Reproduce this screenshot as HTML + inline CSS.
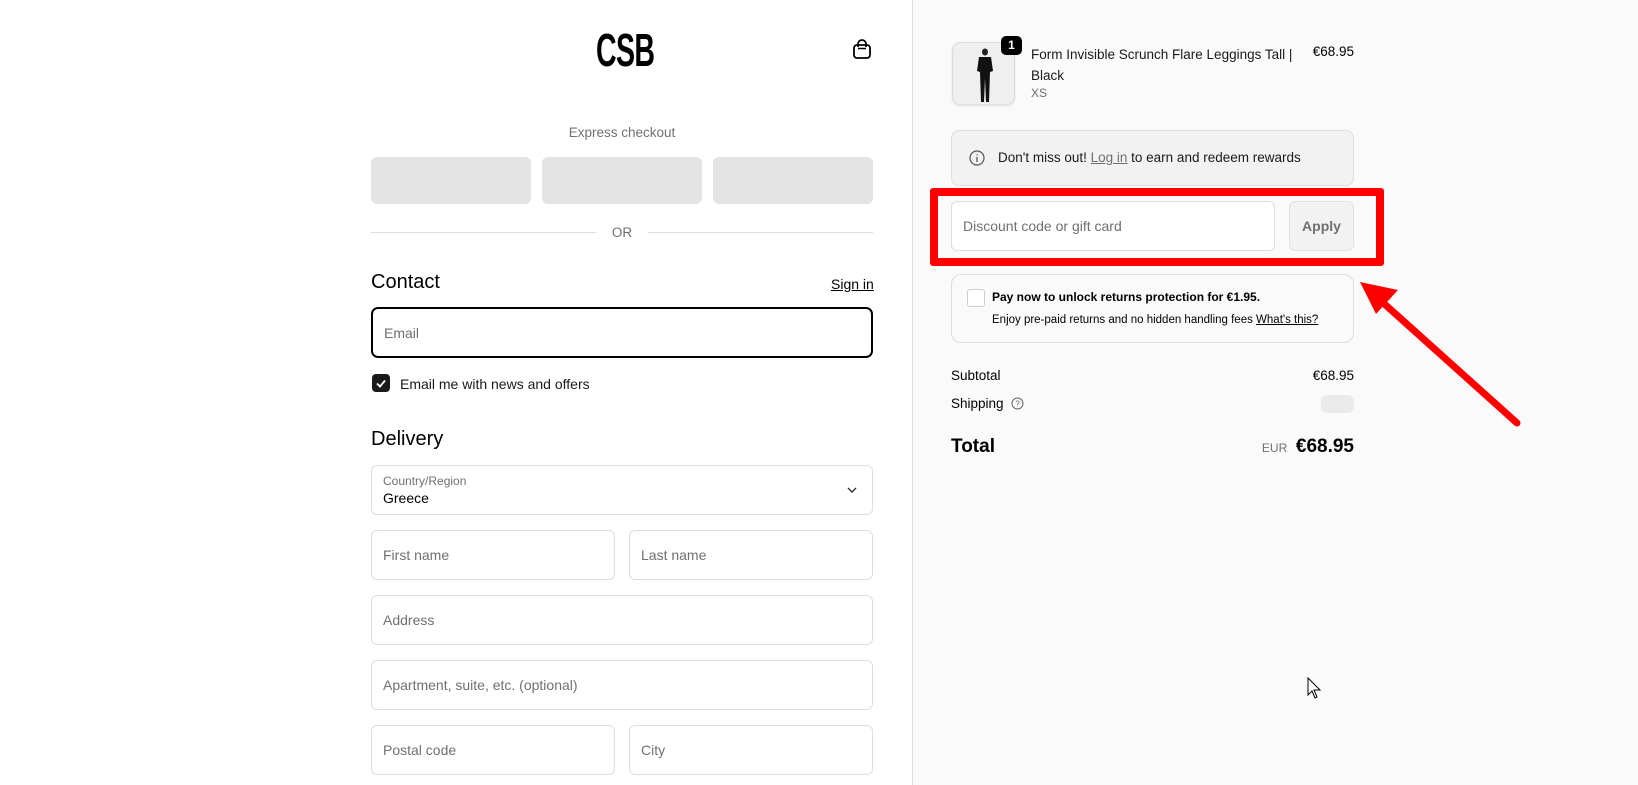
<!DOCTYPE html>
<html><head><meta charset="utf-8"><style>
*{box-sizing:border-box;margin:0;padding:0}
body{width:1638px;height:785px;overflow:hidden;background:#fff;font-family:"Liberation Sans",sans-serif;color:#000;position:relative;font-size:14px}
.a{position:absolute}
.right{left:912px;top:0;width:726px;height:785px;background:#fafafa;border-left:1px solid #dedede}
.in{position:absolute;border:1px solid #dedede;border-radius:6px;background:#fff;color:#707070;font-size:14px;padding-left:11px;display:flex;align-items:center}
.gb{position:absolute;top:157px;height:47px;width:160px;background:#e3e3e3;border-radius:6px}
</style></head><body>
<div class="a" style="left:596px;top:27px;font-family:'Liberation Sans Narrow','Liberation Sans',sans-serif;font-weight:bold;font-size:46px;letter-spacing:-1px;transform:scaleX(0.62);transform-origin:left top;line-height:46px">CSB</div>
<svg class="a" style="left:852px;top:38px" width="20" height="22" viewBox="0 0 20 22"><rect x="2" y="7" width="16" height="13" rx="3" fill="none" stroke="#000" stroke-width="1.8"/><path d="M6 9V6a4 4 0 0 1 8 0v3" fill="none" stroke="#000" stroke-width="1.8"/><path d="M6 10.5h8" stroke="#000" stroke-width="1.5"/></svg>
<div class="a" style="left:371px;width:502px;top:125px;text-align:center;color:#707070;font-size:13.5px">Express checkout</div>
<div class="gb" style="left:371px"></div><div class="gb" style="left:542px"></div><div class="gb" style="left:713px"></div>
<div class="a" style="left:371px;top:232px;width:225px;height:1px;background:#dedede"></div>
<div class="a" style="left:648px;top:232px;width:225px;height:1px;background:#dedede"></div>
<div class="a" style="left:596px;width:52px;top:225px;text-align:center;color:#707070;font-size:13.5px">OR</div>
<div class="a" style="left:371px;top:271px;font-size:20px">Contact</div>
<div class="a" style="left:831px;top:276px;font-size:14px;text-decoration:underline">Sign in</div>
<div class="in" style="left:371px;top:307px;width:502px;height:51px;border:2px solid #000;border-radius:7px">Email</div>
<div class="a" style="left:372px;top:374px;width:18px;height:18px;background:#1a1a1a;border-radius:4px"><svg width="18" height="18"><path d="M5 9.5l3 3 5-6" fill="none" stroke="#fff" stroke-width="1.8"/></svg></div>
<div class="a" style="left:400px;top:376px;font-size:14px;color:#1a1a1a">Email me with news and offers</div>
<div class="a" style="left:371px;top:428px;font-size:20px">Delivery</div>
<div class="in" style="left:371px;top:465px;width:502px;height:50px;display:block;padding-top:8px"><div style="font-size:12px;color:#707070">Country/Region</div><div style="color:#000;font-size:14px;margin-top:2px">Greece</div><svg style="position:absolute;right:14px;top:20px" width="12" height="8"><path d="M2 2l4 4 4-4" fill="none" stroke="#333" stroke-width="1.4"/></svg></div>
<div class="in" style="left:371px;top:530px;width:244px;height:50px">First name</div>
<div class="in" style="left:629px;top:530px;width:244px;height:50px">Last name</div>
<div class="in" style="left:371px;top:595px;width:502px;height:50px">Address</div>
<div class="in" style="left:371px;top:660px;width:502px;height:50px">Apartment, suite, etc. (optional)</div>
<div class="in" style="left:371px;top:725px;width:244px;height:50px">Postal code</div>
<div class="in" style="left:629px;top:725px;width:244px;height:50px">City</div>

<div class="a right"></div>
<div class="a" style="left:952px;top:42px;width:63px;height:63px;border:1px solid #ddd;border-radius:8px;background:#efefef;box-shadow:0 1px 2px rgba(0,0,0,.1)">
<svg width="63" height="63"><ellipse cx="32" cy="9" rx="3" ry="3.5" fill="#222"/><path d="M26 14h12l2 14-3 1-1 30h-3l-1-24-1 24h-3l-1-30-3-1z" fill="#111"/></svg></div>
<div class="a" style="left:1001px;top:36px;width:21px;height:19px;background:#000;color:#fff;border-radius:5px;font-size:12px;font-weight:bold;text-align:center;line-height:19px">1</div>
<div class="a" style="left:1031px;top:44px;width:270px;font-size:13.5px;line-height:21px;color:#1a1a1a">Form Invisible Scrunch Flare Leggings Tall | Black</div>
<div class="a" style="left:1031px;top:86px;font-size:12px;color:#707070">XS</div>
<div class="a" style="left:1300px;top:44px;width:54px;text-align:right;font-size:13.5px">€68.95</div>
<div class="a" style="left:951px;top:130px;width:403px;height:56px;border:1px solid #dedede;border-radius:8px;background:#f2f2f2"></div>
<svg class="a" style="left:969px;top:150px" width="16" height="16"><circle cx="8" cy="8" r="7" fill="none" stroke="#555" stroke-width="1.2"/><path d="M8 7v5M8 4.5v1" stroke="#555" stroke-width="1.3"/></svg>
<div class="a" style="left:998px;top:150px;font-size:13.5px;color:#1a1a1a">Don't miss out! <span style="color:#707070;text-decoration:underline">Log in</span> to earn and redeem rewards</div>
<div class="a" style="left:930px;top:188px;width:454px;height:78px;border:8px solid #f00;border-radius:3px"></div>
<div class="in" style="left:951px;top:201px;width:324px;height:50px">Discount code or gift card</div>
<div class="a" style="left:1289px;top:201px;width:65px;height:50px;border:1px solid #e3e3e3;border-radius:6px;background:#f2f2f2;color:#707070;font-weight:bold;font-size:14px;text-align:center;line-height:48px">Apply</div>
<div class="a" style="left:951px;top:274px;width:403px;height:69px;border:1px solid #dedede;border-radius:10px;background:#fafafa"></div>
<div class="a" style="left:967px;top:289px;width:18px;height:18px;border:1px solid #ccc;border-radius:3px;background:#fff"></div>
<div class="a" style="left:992px;top:290px;font-size:12px;font-weight:bold">Pay now to unlock returns protection for €1.95.</div>
<div class="a" style="left:992px;top:314px;font-size:11.5px">Enjoy pre-paid returns and no hidden handling fees <u>What's this?</u></div>
<div class="a" style="left:951px;top:368px;font-size:13.5px">Subtotal</div>
<div class="a" style="left:1290px;top:368px;width:64px;text-align:right;font-size:13.5px">€68.95</div>
<div class="a" style="left:951px;top:396px;font-size:13.5px">Shipping</div>
<svg class="a" style="left:1011px;top:397px" width="13" height="13"><circle cx="6.5" cy="6.5" r="5.5" fill="none" stroke="#666"/><text x="6.5" y="9.5" font-size="8" text-anchor="middle" fill="#666" font-family="Liberation Sans">?</text></svg>
<div class="a" style="left:1321px;top:395px;width:33px;height:18px;background:#ebebeb;border-radius:6px"></div>
<div class="a" style="left:951px;top:436px;font-size:19px;font-weight:bold">Total</div>
<div class="a" style="left:1260px;top:436px;width:94px;text-align:right;font-size:19px;font-weight:bold"><span style="font-size:12px;font-weight:normal;color:#707070">EUR&nbsp;</span> €68.95</div>
<svg class="a" style="left:0;top:0" width="1638" height="785"><line x1="1517" y1="423" x2="1380" y2="300" stroke="#f00" stroke-width="7" stroke-linecap="round"/><path d="M1360 282l38 8-22 24z" fill="#f00"/>
<path d="M1308 678v17l4-4 3 7 2-1-3-7h6z" fill="#fff" stroke="#000" stroke-width="1"/></svg>
</body></html>
